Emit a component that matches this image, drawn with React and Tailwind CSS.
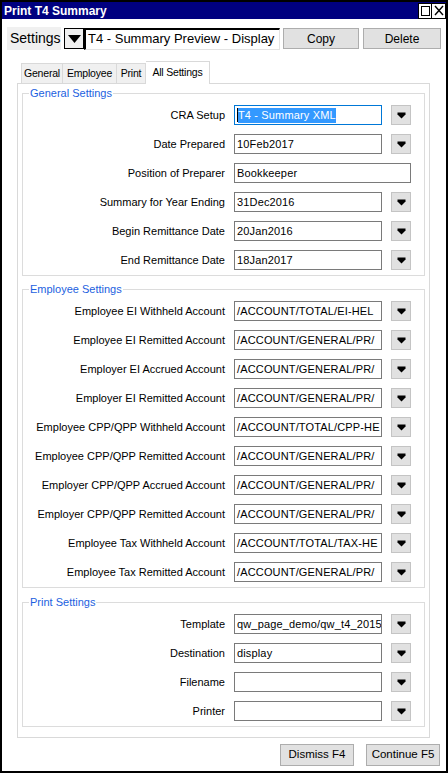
import React from "react";

const font = { fontFamily: '"Liberation Sans", Arial, sans-serif' };

function DownArrow() {
    return (
        <svg width="9" height="7" viewBox="0 0 9 7">
            <path d="M0.5 0.5h8v2L4.5 6.5 0.5 2.5z" fill="#000" />
        </svg>
    );
}

function DropBtn() {
    return (
        <div className="ml-[9px] w-[20px] h-[20px] bg-[#e1e1e1] border border-[#c4c4c4] flex items-center justify-center shrink-0">
            <DownArrow />
        </div>
    );
}

function Row({ label, value, btn = true, focused = false }) {
    return (
        <div className="flex items-center h-[20px]">
            <div className="w-[211px] pr-[9px] text-right text-[11px] text-black whitespace-nowrap shrink-0">{label}</div>
            <div
                className={`h-[20px] flex items-center px-[2px] overflow-hidden whitespace-nowrap text-[11px] tracking-[0.15px] bg-white shrink-0 ${btn ? "w-[148px]" : "w-[177px]"} ${focused ? "border border-[#0078d7]" : "border border-[#7a7a7a]"}`}
            >
                {focused ? (
                    <span className="flex items-center h-[15px]">
                        <span className="w-px h-[14px] bg-black" />
                        <span className="bg-[#3399ff] text-white leading-[15px]">{value}</span>
                    </span>
                ) : (
                    <span>{value}</span>
                )}
            </div>
            {btn && <DropBtn />}
        </div>
    );
}

function Group({ title, rows, className = "" }) {
    return (
        <fieldset className={`mx-[4px] border border-[#dcdcdc] px-0 pt-[5px] pb-[5px] ${className}`}>
            <legend className="ml-[6px] px-[1px] text-[11px] leading-[13px] text-[#1c5fe0]">{title}</legend>
            <div className="flex flex-col gap-[9px]">
                {rows.map((r, i) => (
                    <Row key={i} {...r} />
                ))}
            </div>
        </fieldset>
    );
}

const general = [
    { label: "CRA Setup", value: "T4 - Summary XML", focused: true },
    { label: "Date Prepared", value: "10Feb2017" },
    { label: "Position of Preparer", value: "Bookkeeper", btn: false },
    { label: "Summary for Year Ending", value: "31Dec2016" },
    { label: "Begin Remittance Date", value: "20Jan2016" },
    { label: "End Remittance Date", value: "18Jan2017" },
];

const employee = [
    { label: "Employee EI Withheld Account", value: "/ACCOUNT/TOTAL/EI-HEL" },
    { label: "Employee EI Remitted Account", value: "/ACCOUNT/GENERAL/PR/" },
    { label: "Employer EI Accrued Account", value: "/ACCOUNT/GENERAL/PR/" },
    { label: "Employer EI Remitted Account", value: "/ACCOUNT/GENERAL/PR/" },
    { label: "Employee CPP/QPP Withheld Account", value: "/ACCOUNT/TOTAL/CPP-HE" },
    { label: "Employee CPP/QPP Remitted Account", value: "/ACCOUNT/GENERAL/PR/" },
    { label: "Employer CPP/QPP Accrued Account", value: "/ACCOUNT/GENERAL/PR/" },
    { label: "Employer CPP/QPP Remitted Account", value: "/ACCOUNT/GENERAL/PR/" },
    { label: "Employee Tax Withheld Account", value: "/ACCOUNT/TOTAL/TAX-HE" },
    { label: "Employee Tax Remitted Account", value: "/ACCOUNT/GENERAL/PR/" },
];

const print = [
    { label: "Template", value: "qw_page_demo/qw_t4_2015" },
    { label: "Destination", value: "display" },
    { label: "Filename", value: "" },
    { label: "Printer", value: "" },
];

export default function App() {
    return (
        <div style={font} className="w-[448px] h-[773px] border-2 border-black bg-white flex flex-col text-black">
            {/* Title bar */}
            <div className="h-[17px] bg-[#000080] flex items-center justify-between pl-[2px] pr-0 shrink-0">
                <span className="text-white font-bold text-[12px] leading-none">Print T4 Summary</span>
                <div className="flex h-[16px]">
                    <div className="w-[14px] h-[16px] bg-white border border-black flex items-center justify-center">
                        <div className="w-[9px] h-[10px] border border-black" />
                    </div>
                    <div className="w-[14px] h-[16px] bg-white border border-l-0 border-black flex items-center justify-center">
                        <svg width="10" height="11" viewBox="0 0 10 11">
                            <path d="M1 1l8 9M9 1l-8 9" stroke="#000" strokeWidth="1.4" />
                        </svg>
                    </div>
                </div>
            </div>

            {/* Settings row */}
            <div className="flex items-center mt-[8px] pl-[5px] h-[23px]">
                <div className="h-[23px] w-[54px] bg-[#f0f0f0] flex items-center pl-[3px] text-[14px]">Settings</div>
                <div className="ml-[3px] w-[20px] h-[21px] border border-black bg-[#f0f0f0] flex items-center justify-center">
                    <svg width="13" height="8" viewBox="0 0 13 8">
                        <path d="M0 0h13L6.5 8z" fill="#000" />
                    </svg>
                </div>
                <div className="w-[196px] h-[22px] border-t-2 border-l-2 border-black border-r border-b border-r-[#e3e3e3] border-b-[#e3e3e3] flex items-center pl-[2px] text-[13px] whitespace-nowrap overflow-hidden">
                    T4 - Summary Preview - Display
                </div>
                <button className="ml-[3px] w-[76px] h-[21px] bg-[#e1e1e1] border border-[#adadad] text-[12px]">Copy</button>
                <button className="ml-[4px] w-[78px] h-[21px] bg-[#e1e1e1] border border-[#adadad] text-[12px]">Delete</button>
            </div>

            {/* Tabs */}
            <div className="flex items-end mt-[11px] ml-[19px] h-[22px] text-[10.5px] tracking-[-0.2px] relative z-10">
                <div className="w-[42px] h-[20px] bg-[#f0f0f0] border border-[#d9d9d9] border-b-0 flex items-center justify-center">General</div>
                <div className="w-[54px] h-[20px] bg-[#f0f0f0] border border-l-0 border-[#d9d9d9] border-b-0 flex items-center justify-center">Employee</div>
                <div className="w-[29px] h-[20px] bg-[#f0f0f0] border border-l-0 border-[#d9d9d9] border-b-0 flex items-center justify-center">Print</div>
                <div className="w-[64px] h-[23px] -mb-px bg-white border border-l-0 border-[#d9d9d9] border-b-0 flex items-start pt-[3px] justify-center">All Settings</div>
            </div>

            {/* Tab panel */}
            <div className="ml-[15px] w-[413px] border border-[#d9d9d9] bg-white pt-[3px] pb-[10px]">
                <Group title="General Settings" rows={general} />
                <Group title="Employee Settings" rows={employee} className="mt-[7px]" />
                <Group title="Print Settings" rows={print} className="mt-[8px]" />
            </div>

            {/* Footer buttons */}
            <div className="flex justify-end gap-[12px] mt-[6px] pr-[6px]">
                <button className="w-[74px] h-[22px] bg-[#e1e1e1] border border-[#adadad] text-[11.5px]">Dismiss F4</button>
                <button className="w-[74px] h-[22px] bg-[#e1e1e1] border border-[#adadad] text-[11.5px]">Continue F5</button>
            </div>
        </div>
    );
}
